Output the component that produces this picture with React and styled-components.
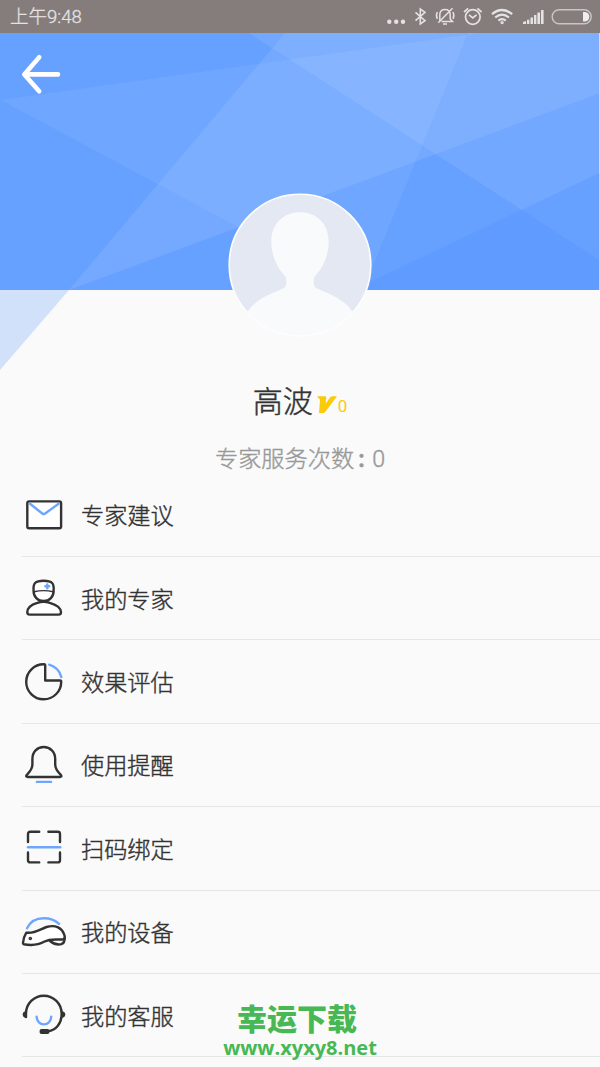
import React from 'react';
import styled, { createGlobalStyle } from 'styled-components';

const GlobalStyle = createGlobalStyle`
  * {
    box-sizing: border-box;
  }
  body {
    margin: 0;
    background: #fafafa;
    font-family: Roboto, 'Noto Sans CJK SC', sans-serif;
  }
`

const Page = styled.div`
  position: relative;
  width: 600px;
  height: 1067px;
  overflow: hidden;
  background: #fafafa;
`

const StatusBar = styled.div`
  display: flex;
  align-items: center;
  justify-content: space-between;
  height: 33px;
  padding: 0 8px 0 10px;
  background: #857d7c;
  color: #e4e2e2;
`

const Time = styled.span`
  font-size: 18.5px;
  font-weight: 300;
  line-height: 33px;
  padding-top: 2px;
  -webkit-text-stroke: 0.3px #e4e2e2;
`

const StatusIcons = styled.div`
  display: flex;
  height: 33px;
  svg {
    display: block;
  }
`

const Hero = styled.header`
  position: relative;
  height: 338px;
  display: flex;
  flex-direction: column;
  align-items: center;
`

const Backdrop = styled.svg`
  position: absolute;
  top: 0;
  left: 0;
`

const BackButton = styled.button`
  position: relative;
  align-self: flex-start;
  width: 42px;
  height: 42px;
  margin: 20px 0 0 20px;
  padding: 0;
  border: none;
  background: none;
  svg {
    display: block;
  }
`

const Avatar = styled.div`
  position: relative;
  width: 144px;
  height: 144px;
  margin-top: 98px;
  svg {
    display: block;
  }
`

const Profile = styled.section`
  display: flex;
  flex-direction: column;
  align-items: center;
  height: 102.6px;
`

const NameRow = styled.div`
  display: flex;
  height: 60px;
  align-items: center;
`

const Name = styled.h1`
  margin: 0;
  padding-top: 2px;
  font-size: 30px;
  font-weight: 300;
  line-height: 60px;
  color: #333;
  -webkit-text-stroke: 0.45px #333;
`

const Level = styled.span`
  font-size: 17px;
  line-height: 20px;
  padding-top: 9px;
  color: #fbcb09;
`

const VipMark = styled.svg`
  flex: none;
  margin: 8px 1px 0 4px;
`

const ServiceCount = styled.p`
  display: flex;
  margin: 13px 0 0;
  font-size: 23.2px;
  font-weight: 300;
  line-height: 30px;
  color: #999;
  -webkit-text-stroke: 0.4px #999;
`

const Colon = styled.span`
  width: 18px;
  padding-left: 4px;
  font-weight: 700;
`

const Menu = styled.ul`
  margin: 0;
  padding: 0 0 0 22px;
  list-style: none;
`

const MenuItem = styled.li`
  display: flex;
  align-items: center;
  height: 83.4px;
  border-bottom: 1px solid #e6e6e6;
  font-size: 23.2px;
  font-weight: 300;
  color: #333;
  svg {
    flex: none;
    margin: 0 13px 0 -2px;
    fill: none;
    stroke: #333;
    stroke-width: 2.4;
    stroke-linecap: round;
    stroke-linejoin: round;
  }
  .thin {
    stroke-width: 1.4;
  }
  .blue {
    stroke: #6ea6ff;
  }
  .solid {
    fill: #333;
  }
  .white {
    fill: #fff;
  }
`

const Label = styled.span`
  line-height: 34px;
  padding-top: 3px;
  -webkit-text-stroke: 0.4px #333;
`

const Watermark = styled.div`
  position: absolute;
  left: 200px;
  top: 997px;
  width: 200px;
  display: flex;
  flex-direction: column;
  align-items: center;
  color: #47b854;
  font-weight: 700;
`

const SiteName = styled.span`
  font-family: 'Noto Sans CJK SC', sans-serif;
  font-size: 30px;
  font-weight: 900;
  line-height: 40px;
  margin-right: 6px;
`

const SiteUrl = styled.span`
  font-family: 'Open Sans', 'Noto Sans', sans-serif;
  font-size: 20px;
  line-height: 22px;
`

const icons = {
  mail: (
    <>
      <rect className="white" x="7.3" y="10.4" width="33.8" height="26.8" rx="1.8" />
      <path className="blue" d="M10 12.8 L22.6 22.7 Q23.7 23.5 24.8 22.7 L38.6 12.8" />
    </>
  ),
  doctor: (
    <>
      <path className="white" d="M13.6 17 C12.9 9.5 15 6.7 23.6 6.7 S34.3 9.5 33.6 17 C33.8 22.5 29.5 27 23.6 27 C17.7 27 13.4 22.5 13.6 17Z" />
      <path className="thin" d="M14 17.8 Q23.6 15.4 33.2 17.8" />
      <path className="white" d="M17.4 28.8 Q23.6 26.7 29.8 28.8 C36 30.6 41 33.5 41 38.2 Q41 40.6 38.4 40.6 H9.8 Q7.3 40.6 7.3 38.2 C7.3 33.5 11.2 30.6 17.4 28.8Z" />
      <path className="blue" d="M27.3 10.4 V14.2 M25.4 12.3 H29.2" />
    </>
  ),
  pie: (
    <>
      <path d="M23.9 6.3 A17.5 17.5 0 1 0 41.2 23.9 Q41.4 22.5 40.2 22.5 H25.2 V7.4 Q25.2 6.2 23.9 6.3Z" />
      <path className="blue" d="M29.2 6.7 A17.6 17.6 0 0 1 41.3 19" />
    </>
  ),
  bell: (
    <>
      <path d="M12.4 18 C12.4 10.8 17.2 6 23.7 6 S35.2 10.8 35.2 18 V23.5 C35.2 28.5 38 31 40.9 34 Q42.2 36 39.8 36 H7.8 Q5.4 36 6.7 34 C9.4 31 12.4 28.5 12.4 23.5Z" />
      <path className="blue" d="M16.9 40.9 H31" />
    </>
  ),
  scan: (
    <>
      <path d="M8 18 V10 Q8 7.8 10.2 7.8 H19.2 M28.4 7.8 H37.8 Q40 7.8 40 10 V18 M40 28.4 V36.2 Q40 38.4 37.8 38.4 H28.4 M19.2 38.4 H10.2 Q8 38.4 8 36.2 V28.4" />
      <path className="blue" d="M8 23.3 H40.2" />
    </>
  ),
  device: (
    <>
      <path className="blue" d="M7 20.2 C10.5 13 16.5 10.2 23.7 10.2 C30 10.2 35.2 12.2 39 15.8" />
      <path className="white" d="M6.3 24.6 C14 26 20 21.2 26.5 19 C36 16.2 42 20.5 44 26 Q46.4 31.5 42 31.5 C37 31.8 31 30.2 24 33.8 C18 37.2 12 37.8 3.6 36.2 Q2.8 36 3 34.8 Q3.8 28.5 6.3 24.6Z" />
      <path d="M30 33 C34 36.2 38.5 37 41.3 36.2 C44.3 35 44.9 33 44.6 29.5" />
      <circle className="solid" cx="10.3" cy="30.5" r="0.6" />
    </>
  ),
  service: (
    <>
      <path d="M6 26 V22.5 A17.8 17.8 0 0 1 41.6 22.5 C41.8 32.5 36 39.3 28 40.3" />
      <path className="solid" d="M5.4 21.4 V25.6 Q3.8 25 3.8 23.5 T5.4 21.4Z M42.4 21.4 V25.6 Q44.2 25 44.2 23.5 T42.4 21.4Z" />
      <rect className="solid" x="20.8" y="39.2" width="7.4" height="2.6" rx="0.6" />
      <path className="blue" d="M16.6 25.6 C16.6 36 31.2 36 31.2 25.6" />
    </>
  ),
}

const menu = [
  { icon: 'mail', label: '专家建议' },
  { icon: 'doctor', label: '我的专家' },
  { icon: 'pie', label: '效果评估' },
  { icon: 'bell', label: '使用提醒' },
  { icon: 'scan', label: '扫码绑定' },
  { icon: 'device', label: '我的设备' },
  { icon: 'service', label: '我的客服' },
]

const StatusGlyphs = () => (
  <StatusIcons>
    {/* more */}
    <svg width="24" height="33" viewBox="385 0 24 33" fill="#e4e2e2">
      <circle cx="389.3" cy="21.8" r="2.2" />
      <circle cx="396.2" cy="21.8" r="2.2" />
      <circle cx="403" cy="21.8" r="2.2" />
    </svg>
    {/* bluetooth */}
    <svg width="22" height="33" viewBox="409 0 22 33" fill="none" stroke="#e4e2e2" strokeWidth="1.6">
      <path d="M415.5 12.3 L425 20.7 L420.3 24 V9 L425 12.3 L415.5 20.7" />
    </svg>
    {/* muted bell */}
    <svg width="28" height="33" viewBox="431 0 28 33" fill="none" stroke="#e4e2e2" strokeWidth="1.5">
      <path d="M439.8 20.5 V14.5 Q440 9.4 445 9.4 T450.2 14.5 V19 L452.5 21.6 H441.5 M443 24 H447 M438.3 22.8 L452.5 8.2 M437.3 12 Q435.6 15.5 437.3 18.8 M453 12 Q454.7 15.5 453 18.8" />
    </svg>
    {/* alarm */}
    <svg width="28" height="33" viewBox="459 0 28 33" fill="none" stroke="#e4e2e2" strokeWidth="1.7">
      <circle cx="472.8" cy="17" r="7.3" />
      <path d="M469 14.8 L472.8 18 L476.6 14.8 M464 12 L468.2 8.4 M477.4 8.4 L481.6 12" />
    </svg>
    {/* wifi */}
    <svg width="30" height="33" viewBox="487 0 30 33" fill="none" stroke="#e4e2e2" strokeWidth="2.2">
      <path d="M492 14.2 Q502 5.8 512.2 14.2 M495.2 17.5 Q502 11.7 509 17.5 M498.4 20.6 Q502 17.6 505.8 20.6" />
      <circle cx="502.1" cy="22.6" r="1" strokeWidth="1.4" />
    </svg>
    {/* signal */}
    <svg width="31" height="33" viewBox="517 0 31 33" fill="#e4e2e2">
      <path d="M523 24 V22 L526 21 V24Z M527 24 V19.8 H529.4 V24Z M530.5 24 V17.6 H533 V24Z M534 24 V15 H536.4 V24Z M537.4 24 V12.5 H540 V24Z M541 24 V10 H543.6 V24Z" />
    </svg>
    {/* battery */}
    <svg width="44" height="33" viewBox="548 0 44 33">
      <rect x="552.2" y="9.7" width="39" height="14" rx="7" fill="none" stroke="#c9c5c5" strokeWidth="1.4" />
      <path d="M583 12 H585 Q589.3 12.8 589.3 16.7 T585 21.6 H583Z" fill="#efeded" />
    </svg>
  </StatusIcons>
)

const App = () => {
  return (
    <Page>
      <GlobalStyle />
      <StatusBar>
        <Time>上午9:48</Time>
        <StatusGlyphs />
      </StatusBar>

      <Hero>
        <Backdrop width="600" height="338" viewBox="0 33 600 338">
          <rect x="0" y="33" width="599.3" height="257" fill="#67a1ff" />
          <g fill="#fff">
            <path d="M285 33 H599.3 V93.3 L69 290Z" fillOpacity="0.09" />
            <path d="M1 100 L480 33 H468 L363 290 H355Z" fillOpacity="0.06" />
            <path d="M249 33 H599.3 V260Z" fillOpacity="0.08" />
          </g>
          <path d="M599.3 173 V290 H353Z" fill="#4f92ff" fillOpacity="0.3" />
          <path d="M0 290 H69 L0 370Z" fill="#d2e1fa" />
        </Backdrop>
        <BackButton aria-label="返回">
          <svg width="42" height="42" viewBox="20 53 42 42" fill="none" stroke="#fff" strokeWidth="4.6" strokeLinecap="round" strokeLinejoin="round">
            <path d="M39.2 57.3 L24.3 74.4 L39.2 91.3 M25 74.4 H58" />
          </svg>
        </BackButton>
        <Avatar>
          <svg width="144" height="144" viewBox="228 193 144 144">
            <clipPath id="face">
              <circle cx="300" cy="265" r="70.5" />
            </clipPath>
            <circle cx="300" cy="265" r="71" fill="#e3e8f3" />
            <path
              clipPath="url(#face)"
              fill="#f9fafc"
              d="M300 212.3 C316 212.3 328.7 223 328.7 242 C328.7 256 322.5 268 315 276 Q313.7 278 313.7 281 C313.7 286 314.5 287.5 318 289 C333 295 346 301 352.5 312 V340 H247.5 V312 C254 301 267 295 282 289 C285.5 287.5 286.3 286 286.3 281 Q286.3 278 285 276 C277.5 268 271.3 256 271.3 242 C271.3 223 284 212.3 300 212.3Z"
            />
            <circle cx="300" cy="265" r="70.8" fill="none" stroke="#fdfdfe" strokeWidth="1.6" />
          </svg>
        </Avatar>
      </Hero>

      <Profile>
        <NameRow>
          <Name>高波</Name>
          <VipMark width="20" height="18" viewBox="317 395 20 18">
            <path d="M317.2 395.2 H325.2 Q326.4 395.2 326.3 396.6 L325.6 402.5 L330 396.5 Q330.9 395.2 332.5 395.2 H337 L325.6 410.5 Q324.4 412 322.8 412 H319 L320 399 Q320 397.8 318.4 397.2Z" fill="#fbcb09" />
          </VipMark>
          <Level>0</Level>
        </NameRow>
        <ServiceCount>
          专家服务次数<Colon>:</Colon>0
        </ServiceCount>
      </Profile>

      <Menu>
        {
          menu.map(item => (
            <MenuItem key={item.icon}>
              <svg width="48" height="48" viewBox="0 0 48 48">{icons[item.icon]}</svg>
              <Label>{item.label}</Label>
            </MenuItem>
          ))
        }
      </Menu>

      <Watermark>
        <SiteName>幸运下载</SiteName>
        <SiteUrl>www.xyxy8.net</SiteUrl>
      </Watermark>
    </Page>
  )
}

export default App;
